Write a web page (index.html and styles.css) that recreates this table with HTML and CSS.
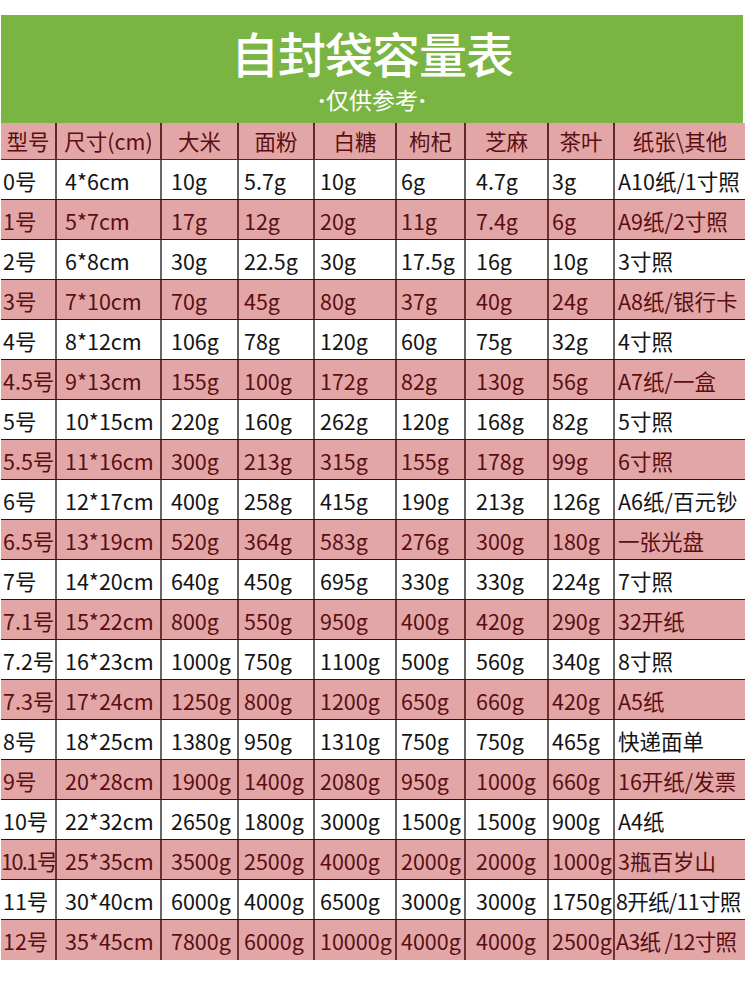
FILE: index.html
```html
<!DOCTYPE html>
<html lang="zh-CN">
<head>
<meta charset="utf-8">
<title>自封袋容量表</title>
<link rel="stylesheet" href="styles.css">
</head>
<body>
<div class="sheet">
  <header class="banner">
    <h1 class="title">自封袋容量表</h1>
    <p class="subtitle"><span class="dot">·</span>仅供参考<span class="dot">·</span></p>
  </header>
  <div class="table">
    <div class="row head">
      <div class="c">型号</div><div class="c">尺寸(cm)</div><div class="c">大米</div><div class="c">面粉</div><div class="c">白糖</div><div class="c">枸杞</div><div class="c">芝麻</div><div class="c">茶叶</div><div class="c">纸张\其他</div>
    </div>
    <div class="row w"><div class="c">0号</div><div class="c">4*6cm</div><div class="c">10g</div><div class="c">5.7g</div><div class="c">10g</div><div class="c">6g</div><div class="c">4.7g</div><div class="c">3g</div><div class="c">A10纸/1寸照</div></div>
    <div class="row p"><div class="c">1号</div><div class="c">5*7cm</div><div class="c">17g</div><div class="c">12g</div><div class="c">20g</div><div class="c">11g</div><div class="c">7.4g</div><div class="c">6g</div><div class="c">A9纸/2寸照</div></div>
    <div class="row w"><div class="c">2号</div><div class="c">6*8cm</div><div class="c">30g</div><div class="c">22.5g</div><div class="c">30g</div><div class="c">17.5g</div><div class="c">16g</div><div class="c">10g</div><div class="c">3寸照</div></div>
    <div class="row p"><div class="c">3号</div><div class="c">7*10cm</div><div class="c">70g</div><div class="c">45g</div><div class="c">80g</div><div class="c">37g</div><div class="c">40g</div><div class="c">24g</div><div class="c">A8纸/银行卡</div></div>
    <div class="row w"><div class="c">4号</div><div class="c">8*12cm</div><div class="c">106g</div><div class="c">78g</div><div class="c">120g</div><div class="c">60g</div><div class="c">75g</div><div class="c">32g</div><div class="c">4寸照</div></div>
    <div class="row p"><div class="c">4.5号</div><div class="c">9*13cm</div><div class="c">155g</div><div class="c">100g</div><div class="c">172g</div><div class="c">82g</div><div class="c">130g</div><div class="c">56g</div><div class="c">A7纸/一盒</div></div>
    <div class="row w"><div class="c">5号</div><div class="c">10*15cm</div><div class="c">220g</div><div class="c">160g</div><div class="c">262g</div><div class="c">120g</div><div class="c">168g</div><div class="c">82g</div><div class="c">5寸照</div></div>
    <div class="row p"><div class="c">5.5号</div><div class="c">11*16cm</div><div class="c">300g</div><div class="c">213g</div><div class="c">315g</div><div class="c">155g</div><div class="c">178g</div><div class="c">99g</div><div class="c">6寸照</div></div>
    <div class="row w"><div class="c">6号</div><div class="c">12*17cm</div><div class="c">400g</div><div class="c">258g</div><div class="c">415g</div><div class="c">190g</div><div class="c">213g</div><div class="c">126g</div><div class="c">A6纸/百元钞</div></div>
    <div class="row p"><div class="c">6.5号</div><div class="c">13*19cm</div><div class="c">520g</div><div class="c">364g</div><div class="c">583g</div><div class="c">276g</div><div class="c">300g</div><div class="c">180g</div><div class="c">一张光盘</div></div>
    <div class="row w"><div class="c">7号</div><div class="c">14*20cm</div><div class="c">640g</div><div class="c">450g</div><div class="c">695g</div><div class="c">330g</div><div class="c">330g</div><div class="c">224g</div><div class="c">7寸照</div></div>
    <div class="row p"><div class="c">7.1号</div><div class="c">15*22cm</div><div class="c">800g</div><div class="c">550g</div><div class="c">950g</div><div class="c">400g</div><div class="c">420g</div><div class="c">290g</div><div class="c">32开纸</div></div>
    <div class="row w"><div class="c">7.2号</div><div class="c">16*23cm</div><div class="c">1000g</div><div class="c">750g</div><div class="c">1100g</div><div class="c">500g</div><div class="c">560g</div><div class="c">340g</div><div class="c">8寸照</div></div>
    <div class="row p"><div class="c">7.3号</div><div class="c">17*24cm</div><div class="c">1250g</div><div class="c">800g</div><div class="c">1200g</div><div class="c">650g</div><div class="c">660g</div><div class="c">420g</div><div class="c">A5纸</div></div>
    <div class="row w"><div class="c">8号</div><div class="c">18*25cm</div><div class="c">1380g</div><div class="c">950g</div><div class="c">1310g</div><div class="c">750g</div><div class="c">750g</div><div class="c">465g</div><div class="c">快递面单</div></div>
    <div class="row p"><div class="c">9号</div><div class="c">20*28cm</div><div class="c">1900g</div><div class="c">1400g</div><div class="c">2080g</div><div class="c">950g</div><div class="c">1000g</div><div class="c">660g</div><div class="c">16开纸/发票</div></div>
    <div class="row w"><div class="c">10号</div><div class="c">22*32cm</div><div class="c">2650g</div><div class="c">1800g</div><div class="c">3000g</div><div class="c">1500g</div><div class="c">1500g</div><div class="c">900g</div><div class="c">A4纸</div></div>
    <div class="row p"><div class="c tight">10.1号</div><div class="c">25*35cm</div><div class="c">3500g</div><div class="c">2500g</div><div class="c">4000g</div><div class="c">2000g</div><div class="c">2000g</div><div class="c">1000g</div><div class="c">3瓶百岁山</div></div>
    <div class="row w"><div class="c">11号</div><div class="c">30*40cm</div><div class="c">6000g</div><div class="c">4000g</div><div class="c">6500g</div><div class="c">3000g</div><div class="c">3000g</div><div class="c">1750g</div><div class="c fit">8开纸/11寸照</div></div>
    <div class="row p last"><div class="c">12号</div><div class="c">35*45cm</div><div class="c">7800g</div><div class="c">6000g</div><div class="c">10000g</div><div class="c">4000g</div><div class="c">4000g</div><div class="c">2500g</div><div class="c fit">A3纸 /12寸照</div></div>
  </div>
</div>
</body>
</html>
```

FILE: styles.css
```css
html, body {
  margin: 0;
  padding: 0;
  background: #ffffff;
}

body {
  font-family: "Noto Sans CJK SC", "Noto Sans", sans-serif;
}

.sheet {
  width: 744px;
  margin: 15px 0 0 1px;
}

.banner {
  background: #7ab442;
  width: 742px;
  height: 108px;
  display: flex;
  flex-direction: column;
  align-items: center;
  color: #ffffff;
}

.title {
  margin: 0;
  padding-top: 12px;
  font-size: 48px;
  font-weight: 500;
  line-height: 50px;
  letter-spacing: -1px;
}

.subtitle {
  margin: 9px 0 0;
  font-size: 23px;
  line-height: 26px;
  font-weight: 400;
}

.dot {
  font-family: "Noto Sans", sans-serif;
  font-weight: 700;
  display: inline-block;
  padding: 0 1px;
}

.table {
  display: flex;
  flex-direction: column;
}

.row {
  display: grid;
  grid-template-columns: 56px 105px 77px 76px 82px 69px 83px 66px 130px;
  height: 40px;
  box-sizing: border-box;
  border-bottom: 1px solid #2a1414;
  font-size: 21.5px;
}

.row.head {
  height: 37px;
  background: #e3a6a7;
  color: #5a0e12;
  border-bottom: 1px solid #6a1a1a;
}

.row.head .c {
  justify-content: center;
  padding: 0;
  border-right-color: #6a2424;
}

.row.w {
  background: #ffffff;
  color: #141414;
}

.row.p {
  background: #e3a6a7;
  color: #5a0e12;
}

.row.last {
  border-bottom: none;
}

.c {
  display: flex;
  align-items: center;
  padding-top: 2px;
  white-space: nowrap;
  overflow: hidden;
  border-right: 2px solid #666666;
  box-sizing: border-box;
  line-height: 1;
}

.row.p .c {
  border-right-color: #6e3030;
}

.c:last-child {
  border-right: none;
}

.c:nth-child(1) { padding-left: 2px; }
.c:nth-child(2) { padding-left: 8px; }
.c:nth-child(3) { padding-left: 9px; }
.c:nth-child(4) { padding-left: 5px; }
.c:nth-child(5) { padding-left: 5px; }
.c:nth-child(6) { padding-left: 4px; }
.c:nth-child(7) { padding-left: 10px; }
.c:nth-child(8) { padding-left: 3px; }
.c:nth-child(9) { padding-left: 3px; }

.c.tight {
  padding-left: 0;
  letter-spacing: -1.5px;
}

.c.fit {
  padding-left: 1px;
  letter-spacing: -0.7px;
}
```
